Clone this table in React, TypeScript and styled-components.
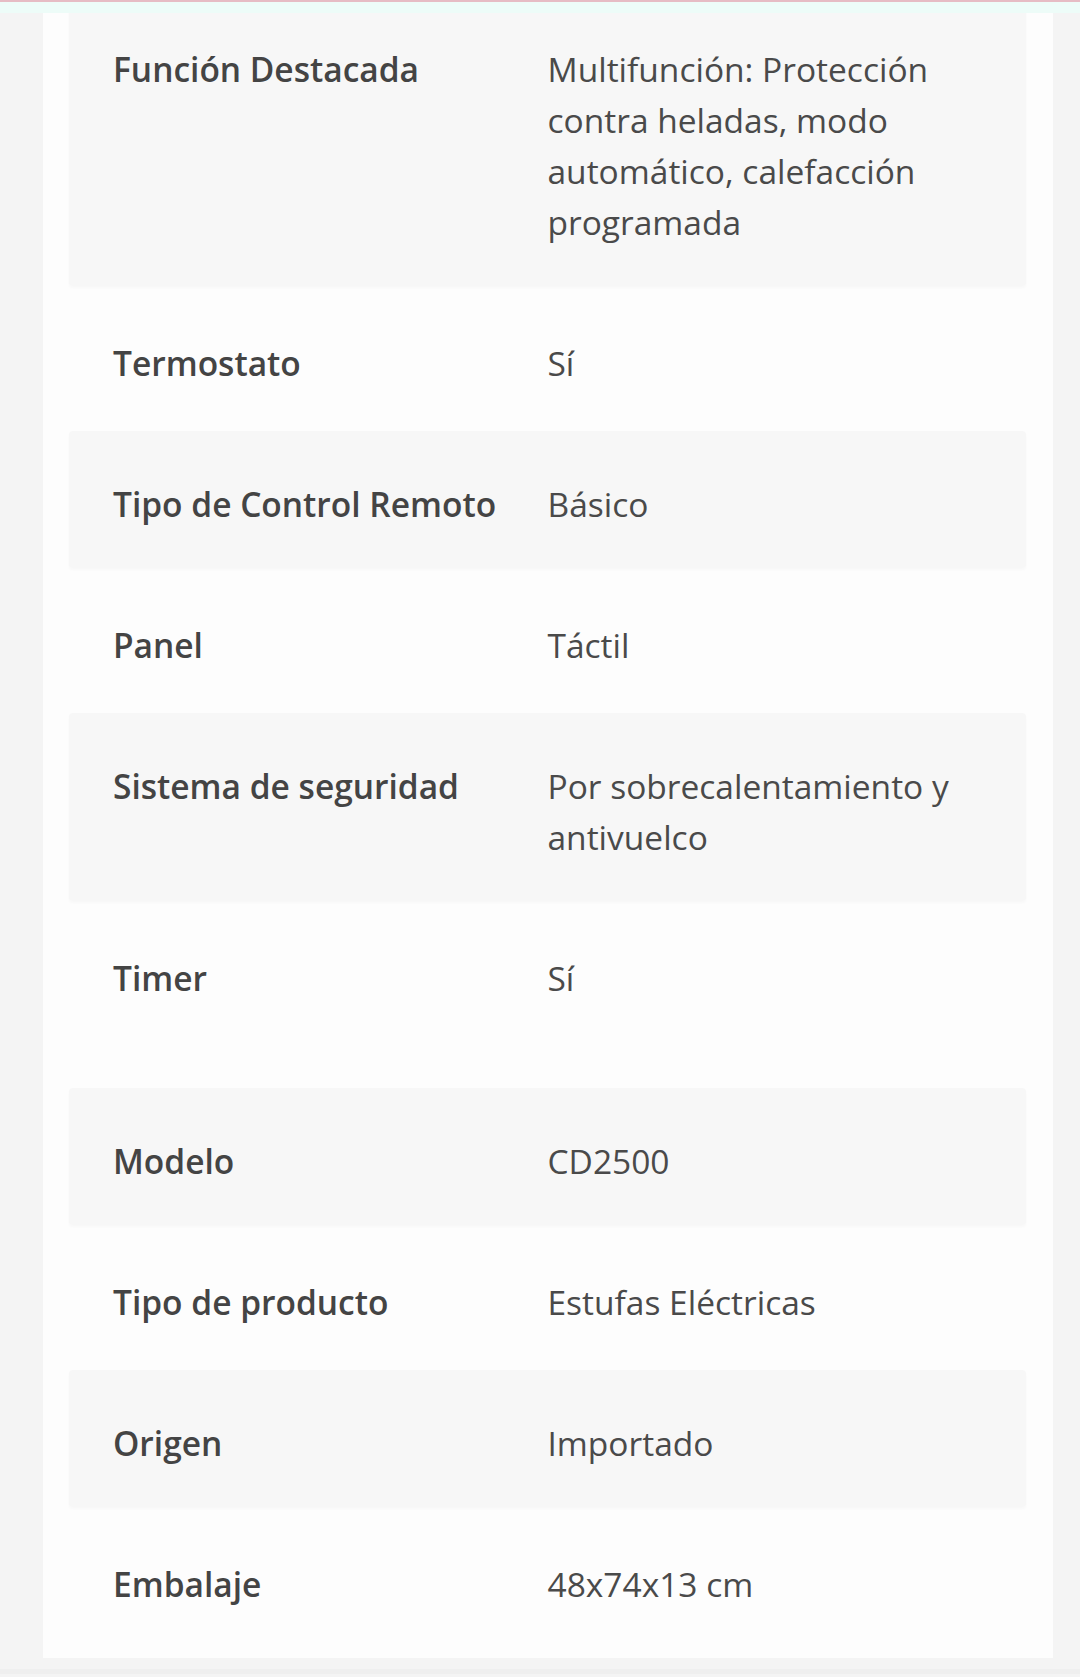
import React from "react";
import styled, { createGlobalStyle } from "styled-components";

interface SpecRow {
  label: string;
  value: string;
  extra?: number;
}

const specs: SpecRow[] = [
  {
    label: "Función Destacada",
    value:
      "Multifunción: Protección contra heladas, modo automático, calefacción programada",
  },
  { label: "Termostato", value: "Sí" },
  { label: "Tipo de Control Remoto", value: "Básico" },
  { label: "Panel", value: "Táctil" },
  { label: "Sistema de seguridad", value: "Por sobrecalentamiento y antivuelco" },
  { label: "Timer", value: "Sí", extra: 42 },
  { label: "Modelo", value: "CD2500" },
  { label: "Tipo de producto", value: "Estufas Eléctricas" },
  { label: "Origen", value: "Importado" },
  { label: "Embalaje", value: "48x74x13 cm" },
];

const App = () => {
  return (
    <>
      <GlobalStyle />
      <Page>
        <TopStrip />
        <Card>
          {specs.map((item, index) => (
            <Row key={index} $striped={index % 2 === 0} $extra={item.extra ?? 0}>
              <Label>{item.label}</Label>
              <Value>{item.value}</Value>
            </Row>
          ))}
        </Card>
        <BottomBand />
      </Page>
    </>
  );
};

const GlobalStyle = createGlobalStyle`
  html, body {
    margin: 0;
    padding: 0;
    background: #f4f4f4;
  }
  body {
    font-family: "Open Sans", "Noto Sans", sans-serif;
    color: #454545;
  }
`;

const Page = styled.div`
  position: relative;
  min-height: 1677px;
  padding: 0 27px 0 43px;
  box-sizing: border-box;
  background: #f4f4f4;
  overflow: hidden;
`;

const TopStrip = styled.div`
  position: absolute;
  top: 0;
  left: 0;
  right: 0;
  height: 11px;
  border-top: 2px solid #e6bcc4;
  background: rgba(236, 252, 247, 0.92);
  z-index: 2;
`;

const Card = styled.div`
  margin-top: -4px;
  background: #fdfdfd;
  padding: 0 27px 6px 26px;
  display: flex;
  flex-direction: column;
`;

const Row = styled.div<{ $striped: boolean; $extra: number }>`
  display: grid;
  grid-template-columns: 1fr 1fr;
  padding: ${(p) => (p.$striped ? "48px 44px" : "52px 44px")};
  padding-bottom: ${(p) => (p.$striped ? 38 : 42) + p.$extra}px;
  background: ${(p) => (p.$striped ? "#f7f7f7" : "transparent")};
  border-radius: 4px;
  box-shadow: ${(p) =>
    p.$striped ? "0 2px 3px rgba(0, 0, 0, 0.025)" : "none"};
  font-size: 33.5px;
  line-height: 51px;
`;

const Label = styled.div`
  font-weight: 600;
  color: #444444;
  padding-right: 10px;
`;

const Value = styled.div`
  font-weight: 400;
  color: #4a4a4a;
`;

const BottomBand = styled.div`
  height: 5px;
  margin: 11px -27px 0 -43px;
  background: #efefef;
`;

export default App;
